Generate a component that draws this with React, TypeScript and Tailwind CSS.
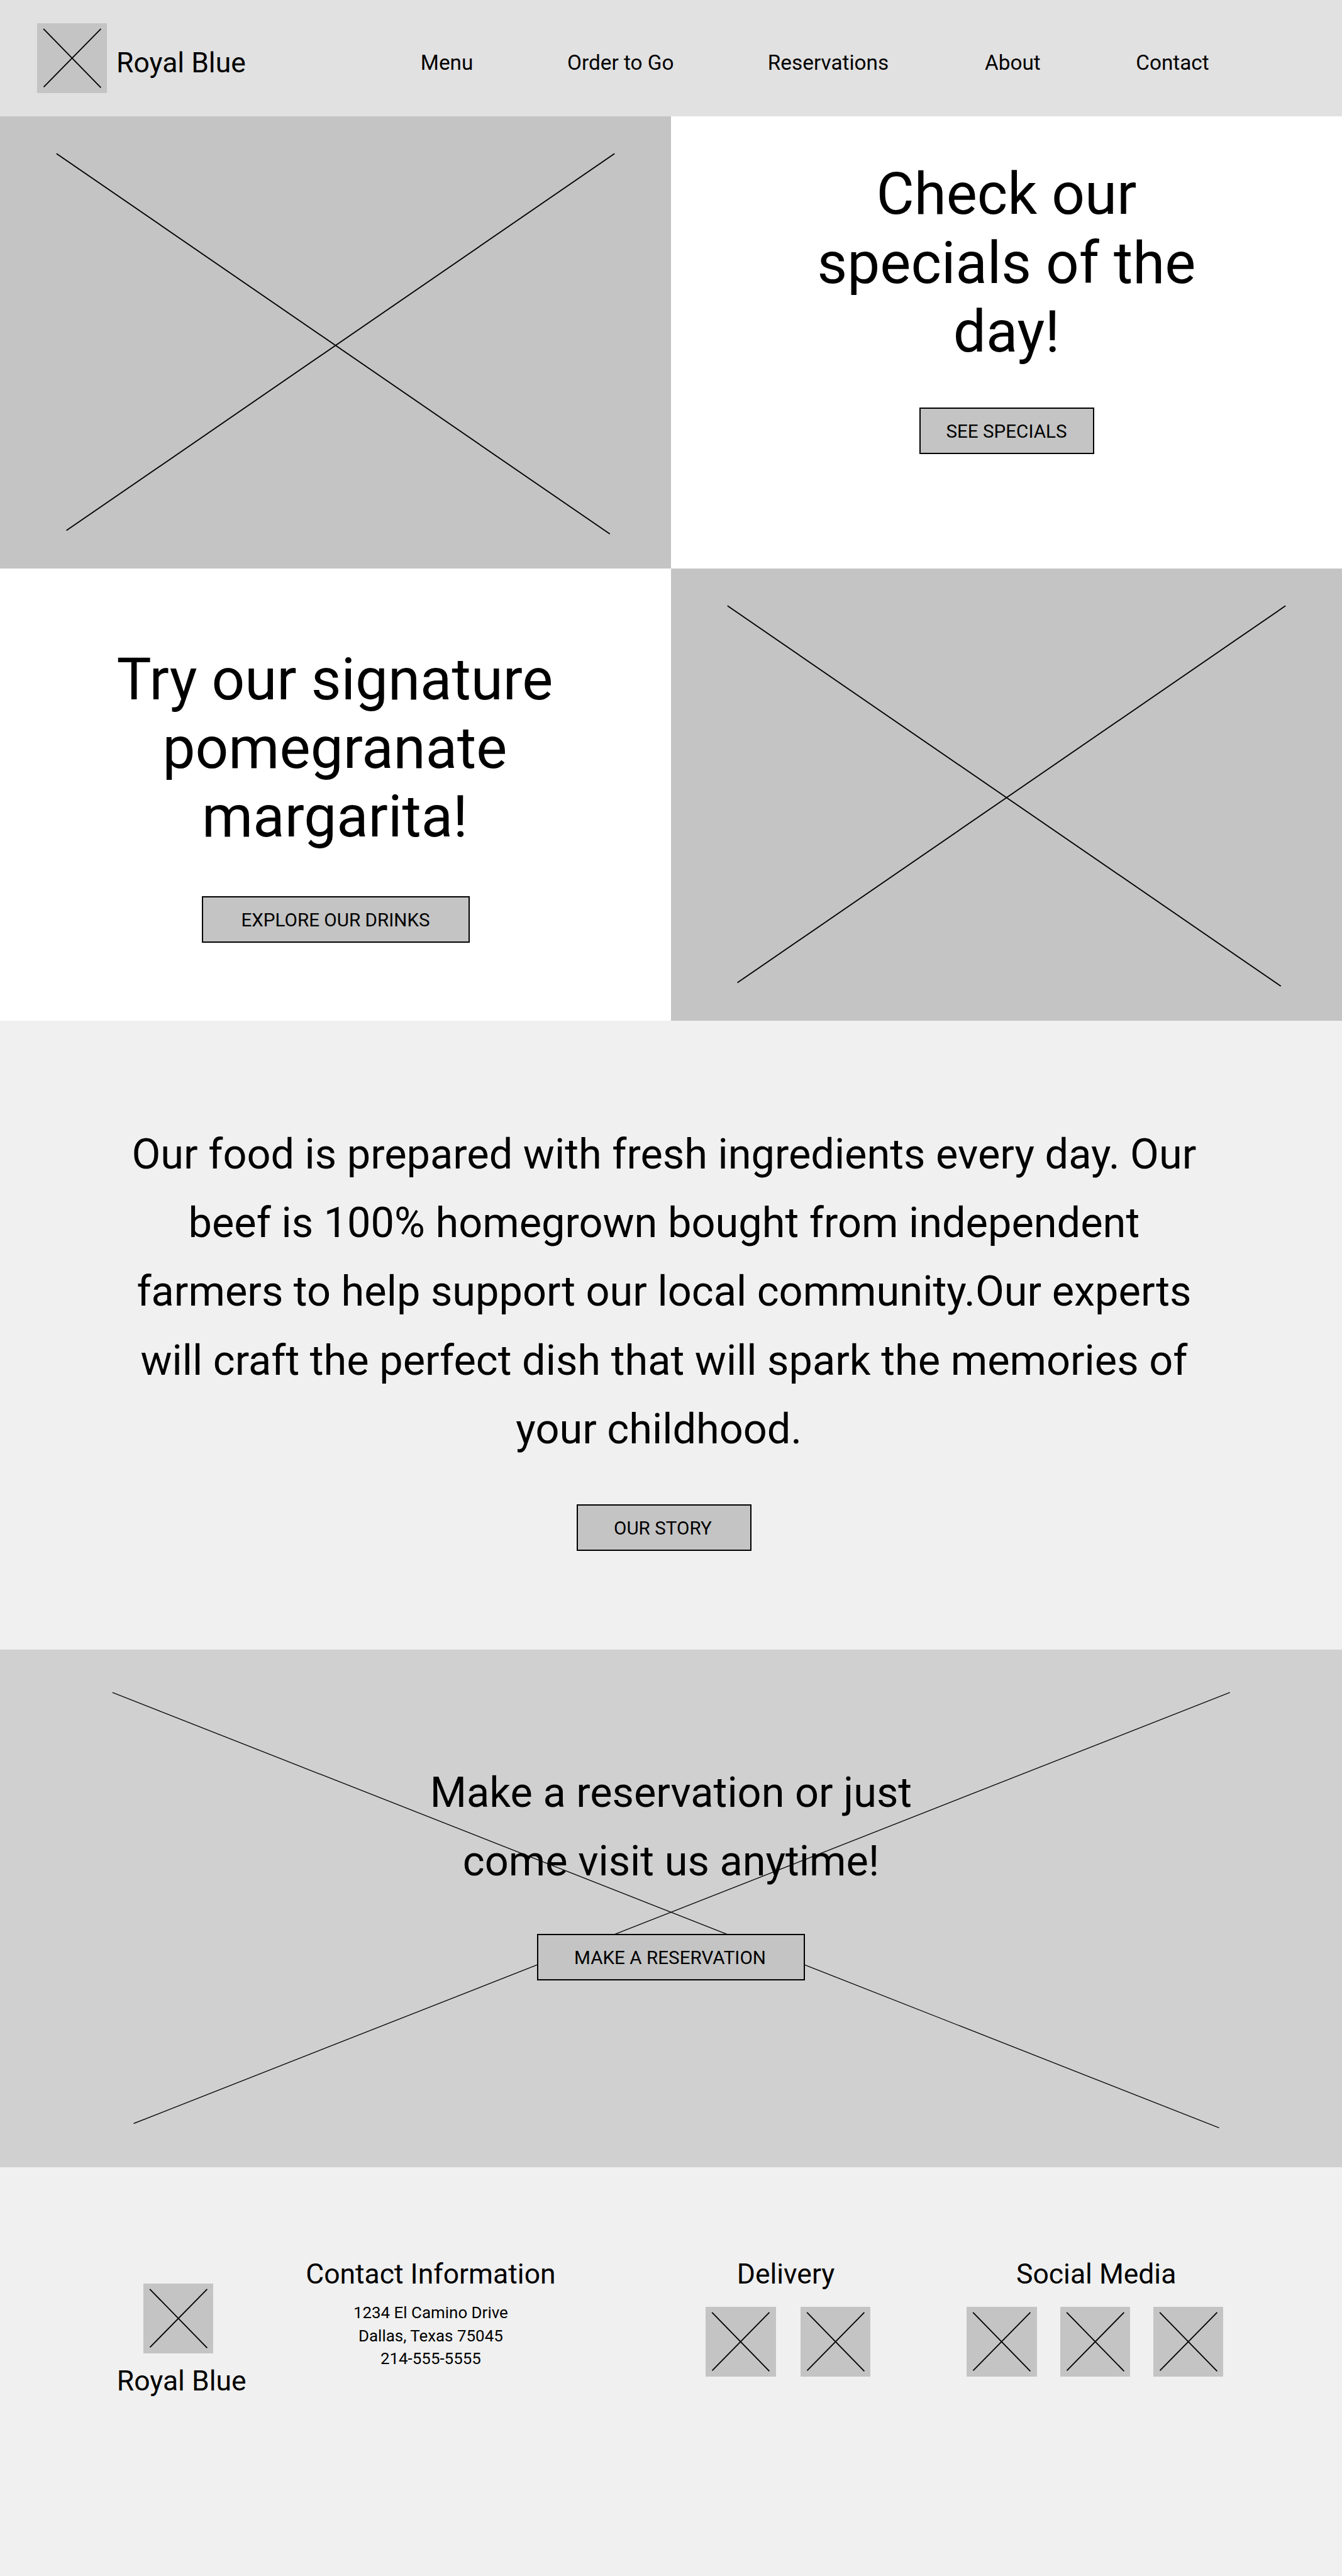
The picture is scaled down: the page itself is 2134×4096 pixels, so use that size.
import type { ReactNode } from "react";

type Segment = [number, number, number, number];

function Cross({ w, h, lines, strokeWidth = 2, opacity = 1 }: { w: number; h: number; lines: Segment[]; strokeWidth?: number; opacity?: number }) {
  return (
    <svg viewBox={`0 0 ${w} ${h}`} preserveAspectRatio="none" className="block h-full w-full" aria-hidden="true">
      {lines.map(([x1, y1, x2, y2]) => (
        <line key={`${x1}-${x2}`} x1={x1} y1={y1} x2={x2} y2={y2} stroke="#000" strokeWidth={strokeWidth} strokeOpacity={opacity} />
      ))}
    </svg>
  );
}

const tileLines: Segment[] = [
  [11, 9.5, 109.5, 110.5],
  [109.5, 9.5, 11.3, 109.5],
];

const photoLines: Segment[] = [
  [97, 64, 1047, 717],
  [1055, 64, 114, 711],
];

const bannerLines: Segment[] = [
  [193, 73.5, 2093, 821],
  [2111.5, 73.5, 229.5, 813.5],
];

function Tile({ className = "" }: { className?: string }) {
  return (
    <div className={`h-[111.15px] w-[111.15px] shrink-0 bg-[#c4c4c4] ${className}`}>
      <Cross w={120} h={120} lines={tileLines} />
    </div>
  );
}

function Photo() {
  return (
    <div className="h-[718.75px] bg-[#c4c4c4]">
      <Cross w={1152} h={776} lines={photoLines} />
    </div>
  );
}

function Button({ children, className = "w-[278px]" }: { children: ReactNode; className?: string }) {
  return (
    <button
      className={`flex h-[74px] items-center justify-center border-2 border-black bg-[#c4c4c4] pt-[3px] text-[29.64px] leading-[35px] whitespace-nowrap ${className}`}
    >
      {children}
    </button>
  );
}

function FooterTitle({ children, className = "" }: { children: ReactNode; className?: string }) {
  return <h3 className={`text-[44.46px] leading-[52.1px] whitespace-nowrap ${className}`}>{children}</h3>;
}

export default function App() {
  return (
    <div className="w-[2134px] bg-white font-['Roboto',sans-serif] text-black">
      <header className="flex h-[185.25px] items-start bg-[#e1e1e1] pl-[59.3px]">
        <Tile className="mt-[37px]" />
        <div className="mt-[73.9px] ml-[14.6px] w-[483.8px] text-[44.46px] leading-[52.1px]">Royal Blue</div>
        <nav className="mt-[80.2px] grid grid-cols-[233.2px_318.8px_345.2px_240.2px_140px] text-[33.34px] leading-[39px] whitespace-nowrap">
          <a>Menu</a>
          <a>Order to Go</a>
          <a>Reservations</a>
          <a>About</a>
          <a>Contact</a>
        </nav>
      </header>

      <section className="grid grid-cols-2">
        <Photo />
        <div className="flex flex-col items-center pt-[69px]">
          <h1 className="mb-[66.2px] text-center text-[92.6px] leading-[109.3px]">
            Check our
            <br />
            specials of the
            <br />
            day!
          </h1>
          <Button>SEE SPECIALS</Button>
        </div>
        <div className="flex flex-col items-center pt-[121.8px]">
          <h2 className="mb-[71px] pr-[2px] text-center text-[92.6px] leading-[109.3px]">
            Try our signature
            <br />
            pomegranate
            <br />
            margarita!
          </h2>
          <Button className="w-[426px]">EXPLORE OUR DRINKS</Button>
        </div>
        <Photo />
      </section>

      <section className="flex h-[1000.4px] flex-col items-center bg-[#f0f0f0] pt-[157.9px] pr-[22.2px]">
        <p className="mb-[64.4px] text-center text-[66.7px] leading-[109.3px] whitespace-nowrap">
          Our food is prepared with fresh ingredients every day. Our
          <br />
          beef is 100% homegrown bought from independent
          <br />
          farmers to help support our local community.Our experts
          <br />
          will craft the perfect dish that will spark the memories of
          <br />
          <span className="pr-[16.5px]">your childhood.</span>
        </p>
        <Button className="w-[278px] pr-[4px]">OUR STORY</Button>
      </section>

      <section className="relative h-[822.5px] bg-[#d0d0d0]">
        <div className="absolute inset-0">
          <Cross w={2304} h={888} lines={bannerLines} strokeWidth={1.5} opacity={0.95} />
        </div>
        <div className="relative flex flex-col items-center pt-[172.6px]">
          <p className="mb-[60.9px] text-center text-[66.7px] leading-[109.3px] whitespace-nowrap">
            Make a reservation or just
            <br />
            come visit us anytime!
          </p>
          <Button className="w-[426px] pr-[3px]">MAKE A RESERVATION</Button>
        </div>
      </section>

      <footer className="flex h-[650.35px] items-start bg-[#f0f0f0] pt-[144px] pl-[184.3px]">
        <div className="mt-[41.2px] mr-[89.8px] w-[207.5px]">
          <Tile className="ml-[43.5px]" />
          <FooterTitle className="mt-[18px] pl-[1.5px]">Royal Blue</FooterTitle>
        </div>
        <div className="mr-[234.3px] w-[406.6px] text-center">
          <FooterTitle>Contact Information</FooterTitle>
          <p className="mt-[17.7px] text-[25.93px] leading-[36.3px]">
            1234 El Camino Drive
            <br />
            Dallas, Texas 75045
            <br />
            214-555-5555
          </p>
        </div>
        <div className="mr-[153.8px] w-[261.2px] text-center">
          <FooterTitle className="pr-[7px]">Delivery</FooterTitle>
          <div className="mt-[26.2px] flex gap-[38.9px]">
            <Tile />
            <Tile />
          </div>
        </div>
        <div className="w-[407.5px] text-center">
          <FooterTitle className="pl-[4px]">Social Media</FooterTitle>
          <div className="mt-[26.2px] flex gap-[37.05px]">
            <Tile />
            <Tile />
            <Tile />
          </div>
        </div>
      </footer>
    </div>
  );
}
